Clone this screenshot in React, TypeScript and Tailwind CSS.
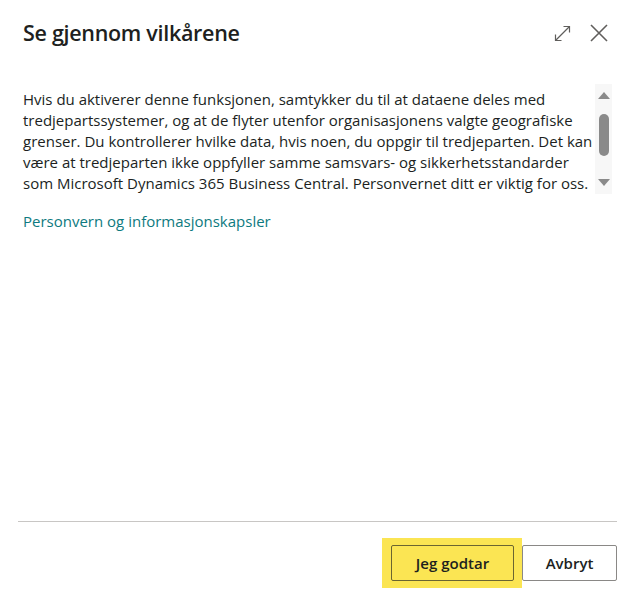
const lines = [
  "Hvis du aktiverer denne funksjonen, samtykker du til at dataene deles med",
  "tredjepartssystemer, og at de flyter utenfor organisasjonens valgte geografiske",
  "grenser. Du kontrollerer hvilke data, hvis noen, du oppgir til tredjeparten. Det kan",
  "være at tredjeparten ikke oppfyller samme samsvars- og sikkerhetsstandarder",
  "som Microsoft Dynamics 365 Business Central. Personvernet ditt er viktig for oss.",
];

export default function App() {
  return (
    <div
      className="w-[635px] h-[600px] bg-white flex flex-col text-[#201f1e]"
      style={{ fontFamily: "'Open Sans', 'Noto Sans', sans-serif" }}
    >
      {/* Header */}
      <div className="flex items-center justify-between pl-[23px] pr-[27px] pt-[14px] h-[52px]">
        <h1 className="text-[21.5px] font-semibold tracking-[-0.3px]">Se gjennom vilkårene</h1>
        <div className="flex items-center gap-[19px] text-[#605e5c]">
          <svg width="17" height="17" viewBox="0 0 17 17" fill="none" stroke="currentColor" strokeWidth="1.2">
            <path d="M1.5 15.5 L15.5 1.5" />
            <path d="M9.5 1.5 H15.5 V7.5" />
            <path d="M1.5 9.5 V15.5 H7.5" />
          </svg>
          <svg width="18" height="18" viewBox="0 0 18 18" fill="none" stroke="currentColor" strokeWidth="1.6">
            <path d="M1 1 L17 17 M17 1 L1 17" />
          </svg>
        </div>
      </div>

      {/* Body */}
      <div className="flex pl-[23px] pr-[23px] pt-[37px]">
        <p className="flex-1 min-w-0 text-[15px] leading-[21px] pr-[6px]">
          {lines.map((l) => (
            <span key={l} className="block whitespace-nowrap">
              {l}
            </span>
          ))}
        </p>
        <div className="shrink-0 w-[17px] h-[110px] -mt-[5px] bg-[#f7f7f7] flex flex-col items-center justify-between py-[8px]">
          <div className="w-0 h-0 border-l-[6px] border-r-[6px] border-b-[7px] border-l-transparent border-r-transparent border-b-[#8a8a8a]" />
          <div className="w-[10px] h-[42px] rounded-full bg-[#8a8a8a] -mt-[8px]" />
          <div className="w-0 h-0 border-l-[6px] border-r-[6px] border-t-[7px] border-l-transparent border-r-transparent border-t-[#8a8a8a]" />
        </div>
      </div>

      <a href="#" className="ml-[23px] mt-[16px] text-[15px] text-[#0e7a80] w-fit">
        Personvern og informasjonskapsler
      </a>

      <div className="flex-1" />

      {/* Footer */}
      <div className="mx-[18px] border-t border-[#c8c6c4]" />
      <div className="flex justify-end items-center pr-[18px] pt-[16px] pb-[12px]">
        <div className="bg-[#fbe553] px-[9px] py-[7px] pr-[8px]">
          <button className="h-[36px] w-[123px] border border-[#6b6530] rounded-[2px] text-[15px] font-semibold">
            Jeg godtar
          </button>
        </div>
        <button className="h-[36px] w-[95px] border border-[#8a8886] rounded-[2px] bg-white text-[15px] font-semibold">
          Avbryt
        </button>
      </div>
    </div>
  );
}
